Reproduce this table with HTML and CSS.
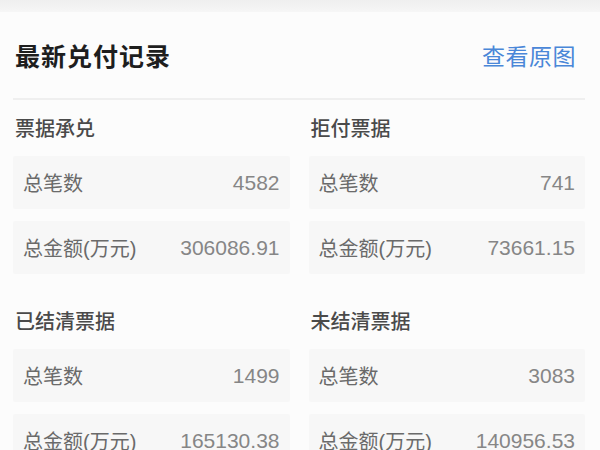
FILE: index.html
```html
<!DOCTYPE html>
<html lang="zh-CN">
<head>
<meta charset="utf-8">
<link rel="stylesheet" href="styles.css">
</head>
<body>
<div class="topband"></div>
<main class="panel">
  <header class="head">
    <h1 class="title">最新兑付记录</h1>
    <a class="link">查看原图</a>
  </header>
  <div class="grid">
    <section class="sec">
      <h2 class="sec-title">票据承兑</h2>
      <div class="card"><span class="label">总笔数</span><span class="val">4582</span></div>
      <div class="card"><span class="label">总金额(万元)</span><span class="val">306086.91</span></div>
    </section>
    <section class="sec">
      <h2 class="sec-title">拒付票据</h2>
      <div class="card"><span class="label">总笔数</span><span class="val">741</span></div>
      <div class="card"><span class="label">总金额(万元)</span><span class="val">73661.15</span></div>
    </section>
    <section class="sec">
      <h2 class="sec-title">已结清票据</h2>
      <div class="card"><span class="label">总笔数</span><span class="val">1499</span></div>
      <div class="card"><span class="label">总金额(万元)</span><span class="val">165130.38</span></div>
    </section>
    <section class="sec">
      <h2 class="sec-title">未结清票据</h2>
      <div class="card"><span class="label">总笔数</span><span class="val">3083</span></div>
      <div class="card"><span class="label">总金额(万元)</span><span class="val">140956.53</span></div>
    </section>
  </div>
</main>
</body>
</html>
```
FILE: styles.css
```css
html, body {
  margin: 0;
  padding: 0;
  background: #fcfcfc;
  font-family: "Liberation Sans", "Noto Sans CJK SC", sans-serif;
  overflow: hidden;
}
.topband {
  height: 12px;
  background: linear-gradient(#efefef, #f6f6f6);
}
.panel {
  padding: 0 15px 0 13px;
}
.head {
  height: 86px;
  display: flex;
  align-items: center;
  justify-content: space-between;
  border-bottom: 2px solid #efefef;
  padding: 0 9px 0 2px;
}
.title {
  margin: 0;
  font-size: 25px;
  font-weight: 600;
  color: #1e1e1e;
  letter-spacing: 1px;
}
.link {
  font-size: 23px;
  color: #4a87d8;
  letter-spacing: 0.5px;
}
.grid {
  display: grid;
  grid-template-columns: 1fr 1fr;
  column-gap: 19px;
  row-gap: 33px;
  padding-top: 14px;
}
.sec {
  display: flex;
  flex-direction: column;
  gap: 12px;
}
.sec-title {
  margin: 0;
  padding-left: 2px;
  font-size: 20px;
  line-height: 30px;
  font-weight: 500;
  color: #4a4a4a;
}
.card {
  height: 53px;
  background: #f7f7f7;
  display: flex;
  align-items: center;
  justify-content: space-between;
  padding: 0 10px 0 10px;
  border-radius: 2px;
}
.label {
  font-size: 20px;
  color: #6a6a6a;
}
.val {
  font-size: 21px;
  color: #868686;
}
```
